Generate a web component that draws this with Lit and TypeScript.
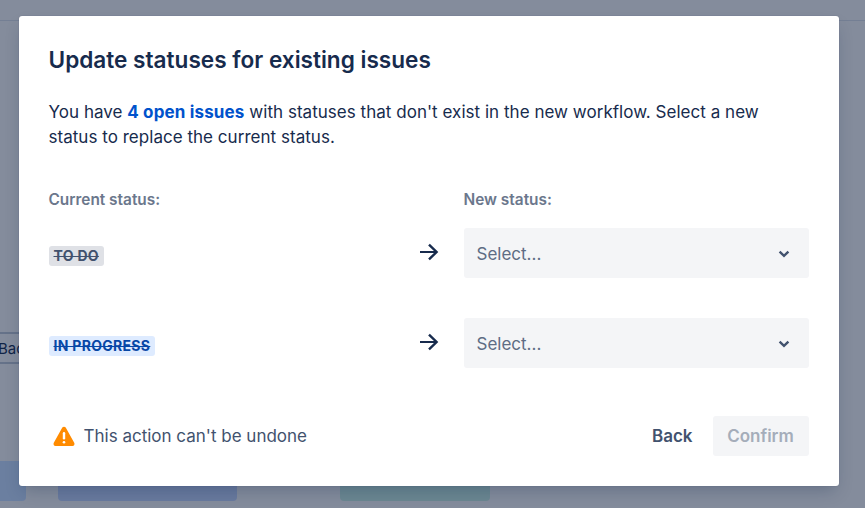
import { LitElement, html, css } from "lit";
import { customElement } from "lit/decorators.js";

@customElement("app-root")
export class AppRoot extends LitElement {
  static styles = css`
    :host { display: block; width: 865px; height: 508px; position: relative; overflow: hidden; background: #fff; font-family: Inter, "Liberation Sans", sans-serif; color: #172b4d; }
    .under { position: absolute; inset: 0; background: rgb(255, 250, 246); }
    .topline { position: absolute; left: 0; right: 0; top: 20px; height: 1px; background: #dfe1e6; }
    .ghost { position: absolute; left: -20px; top: 332px; width: 60px; height: 28px; border: 2px solid #c1c7d0; border-radius: 3px; font-size: 15px; line-height: 30px; padding-left: 16px; color: #172b4d; box-sizing: content-box; }
    .bar { position: absolute; top: 461px; height: 40px; border-radius: 4px; }
    .b1 { left: -20px; width: 46px; background: rgb(205, 225, 255); }
    .b2 { left: 58px; width: 179px; background: rgb(200, 215, 250); }
    .b3 { left: 340px; width: 150px; background: rgb(205, 240, 225); }
    .scrim { position: absolute; inset: 0; background: rgba(9, 30, 66, 0.5); display: flex; align-items: flex-start; justify-content: center; padding: 16px 8px 0 0; box-sizing: border-box; }
    .modal { width: 820px; height: 470px; background: #fff; border-radius: 3px; box-shadow: 0 0 1px rgba(9,30,66,.31), 0 8px 16px -4px rgba(9,30,66,.25); padding: 30px; box-sizing: border-box; display: flex; flex-direction: column; }
    h1 { margin: 0; font-size: 22.6px; line-height: 28px; font-weight: 600; color: #172b4d; }
    p { margin: 26px 0 0; font-size: 17px; line-height: 25px; letter-spacing: 0.03px; color: #172b4d; }
    p b { color: #0052cc; font-weight: 700; letter-spacing: 0.15px; }
    .grid { display: grid; grid-template-columns: 364px 51px 345px; margin-top: 40px; margin-right: -1px; }
    .label { font-size: 15.4px; line-height: 20px; font-weight: 600; color: #6b778c; margin-bottom: 18px; }
    .cell { display: flex; align-items: center; height: 50px; margin-bottom: 40px; box-sizing: border-box; }
    .status { padding-top: 6px; }
    .arrow { padding: 0 0 2px 6px; }
    .lozenge { font-size: 14px; line-height: 20px; font-weight: 700; letter-spacing: 0.3px; text-transform: uppercase; padding: 0 5px; border-radius: 3px; text-decoration: line-through; }
    .grey { background: #dfe1e6; color: #42526e; }
    .blue { background: #deebff; color: #0747a6; }
    .select { width: 345px; background: #f4f5f7; border-radius: 3px; justify-content: space-between; padding: 2px 18px 0 13px; font-size: 17px; color: #5e6c84; }
    .foot { margin-top: auto; display: flex; align-items: center; height: 40px; }
    .warn { display: flex; align-items: center; gap: 8px; font-size: 17px; color: #42526e; flex: 1; padding-left: 3px; }
    .btn { font-size: 17px; font-weight: 600; height: 40px; display: flex; align-items: center; border-radius: 3px; }
    .back { color: #42526e; margin-right: 20px; }
    .confirm { width: 96px; justify-content: center; background: #f4f5f7; color: #a5adba; }
    svg { display: block; flex: none; }
  `;

  private arrow() {
    return html`<svg width="20" height="20" viewBox="0 0 20 20" fill="none" stroke="#172b4d"><path stroke-width="2" d="M1 10h17"/><path stroke-width="2.4" d="M10 2.6l7.6 7.4-7.6 7.4"/></svg>`;
  }
  private chevron() {
    return html`<svg width="14" height="10" viewBox="0 0 14 10" fill="none" stroke="#42526e" stroke-width="2.4"><path d="M2.6 2.6l4.4 4.2 4.4-4.2"/></svg>`;
  }

  render() {
    return html`
      <div class="under">
        <div class="topline"></div>
        <div class="ghost">Back</div>
        <div class="bar b1"></div><div class="bar b2"></div><div class="bar b3"></div>
      </div>
      <div class="scrim">
        <div class="modal">
          <h1>Update statuses for existing issues</h1>
          <p>You have <b>4 open issues</b> with statuses that don't exist in the new workflow. Select a new status to replace the current status.</p>
          <div class="grid">
            <div class="label">Current status:</div><div></div><div class="label">New status:</div>
            <div class="cell status"><span class="lozenge grey">To do</span></div>
            <div class="cell arrow">${this.arrow()}</div>
            <div class="cell select"><span>Select...</span>${this.chevron()}</div>
            <div class="cell status"><span class="lozenge blue">In progress</span></div>
            <div class="cell arrow">${this.arrow()}</div>
            <div class="cell select"><span>Select...</span>${this.chevron()}</div>
          </div>
          <div class="foot">
            <div class="warn">
              <svg width="24" height="24" viewBox="0 0 24 24"><path fill="#ff8b00" d="M10.3 3.6a2 2 0 0 1 3.4 0l8.5 15.2c.8 1.4-.1 3.2-1.7 3.2H3.5c-1.6 0-2.5-1.8-1.7-3.2z"/><rect x="10.8" y="8" width="2.4" height="7.5" rx="1.2" fill="#fff"/><circle cx="12" cy="18.2" r="1.3" fill="#fff"/></svg>
              <span>This action can't be undone</span>
            </div>
            <div class="btn back">Back</div>
            <div class="btn confirm">Confirm</div>
          </div>
        </div>
      </div>
    `;
  }
}
